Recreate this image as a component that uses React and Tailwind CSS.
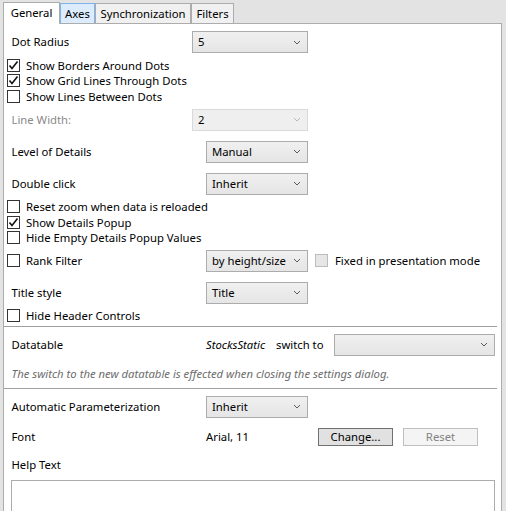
import { useState } from 'react';

const font = { fontFamily: '"Noto Sans", "Open Sans", sans-serif' };

function Chevron({ disabled }) {
  return (
    <svg width="8" height="5" viewBox="0 0 8 5" className="shrink-0">
      <path d="M1 1 L4 4 L7 1" fill="none" stroke={disabled ? '#b8b8b8' : '#5a5a5a'} strokeWidth="1" />
    </svg>
  );
}

function Select({ value, width = 'w-[102px]', disabled }) {
  return (
    <div
      className={`${width} h-[22px] flex items-center justify-between pl-[5px] pr-[6px] border ${
        disabled
          ? 'border-[#d9d9d9] bg-[#efefef] text-black'
          : 'border-[#acacac] bg-gradient-to-b from-[#f0f0f0] to-[#e5e5e5] text-black'
      }`}
    >
      <span>{value}</span>
      <Chevron disabled={disabled} />
    </div>
  );
}

function Check({ checked, disabled }) {
  return (
    <div
      className={`w-[13px] h-[13px] border flex items-center justify-center shrink-0 ${
        disabled ? 'border-[#bcbcbc] bg-[#e6e6e6]' : 'border-[#333333] bg-white'
      }`}
    >
      {checked && (
        <svg width="11" height="11" viewBox="0 0 11 11">
          <path d="M1.5 5.5 L4 8.5 L9.5 1.5" fill="none" stroke="#111" strokeWidth="1.6" />
        </svg>
      )}
    </div>
  );
}

function CheckRow({ label, checked }) {
  return (
    <div className="h-[15.5px] flex items-center gap-[6px]">
      <Check checked={checked} />
      <span>{label}</span>
    </div>
  );
}

function Row({ label, children, className = 'mt-[10px]', labelClass = 'text-black', labelWidth = 'w-[199px]' }) {
  return (
    <div className={`flex items-center ${className}`}>
      <div className={`${labelWidth} pl-[4.5px] ${labelClass}`}>{label}</div>
      {children}
    </div>
  );
}

function Tab({ label, active, hover, width }) {
  if (active) {
    return (
      <div className={`${width} h-[22px] -mb-px pt-[4px] flex justify-center bg-white border border-b-0 border-[#acacac] relative z-10`}>
        {label}
      </div>
    );
  }
  return (
    <div
      className={`${width} h-[20px] flex items-center justify-center border border-b-0 ${
        hover ? 'bg-[#dcecfc] border-[#7eb4ea]' : 'bg-[#f0f0f0] border-[#acacac]'
      }`}
    >
      {label}
    </div>
  );
}

export default function App() {
  const [tab] = useState('General');
  return (
    <div className="w-[506px] h-[511px] bg-[#e3e3e3] overflow-hidden text-[11.3px] leading-none pl-[3px] pr-[4px] pt-[1px]" style={font}>
      <div className="flex items-end h-[22px]">
        <Tab label="General" width="w-[57px]" active={tab === 'General'} />
        <Tab label="Axes" width="w-[35px]" hover />
        <Tab label="Synchronization" width="w-[96px]" />
        <Tab label="Filters" width="w-[43px]" />
      </div>
      <div className="bg-white border border-[#acacac] h-[600px] px-[3px] pt-[7px]">
        <Row label="Dot Radius" className="" labelWidth="w-[185px]">
          <Select value="5" width="w-[116px]" />
        </Row>
        <div className="mt-[4.5px]">
          <CheckRow label="Show Borders Around Dots" checked />
          <CheckRow label="Show Grid Lines Through Dots" checked />
          <CheckRow label="Show Lines Between Dots" />
        </div>
        <Row label="Line Width:" className="mt-[4.5px]" labelClass="text-[#8a8a8a]" labelWidth="w-[185px]">
          <Select value="2" width="w-[116px]" disabled />
        </Row>
        <Row label="Level of Details">
          <Select value="Manual" />
        </Row>
        <Row label="Double click">
          <Select value="Inherit" />
        </Row>
        <div className="mt-[4.5px]">
          <CheckRow label="Reset zoom when data is reloaded" />
          <CheckRow label="Show Details Popup" checked />
          <CheckRow label="Hide Empty Details Popup Values" />
        </div>
        <div className="flex items-center mt-[4px]">
          <div className="w-[199px] flex items-center gap-[6px]">
            <Check />
            <span>Rank Filter</span>
          </div>
          <Select value="by height/size" />
          <div className="ml-[7px] flex items-center gap-[7px]">
            <Check disabled />
            <span>Fixed in presentation mode</span>
          </div>
        </div>
        <Row label="Title style">
          <Select value="Title" />
        </Row>
        <div className="mt-[4.5px]">
          <CheckRow label="Hide Header Controls" />
        </div>
        <div className="-mx-[3px] mr-[1px] mt-[2px] border-t border-[#a0a0a0]" />
        <div className="flex items-center mt-[7px]">
          <div className="w-[199px] pl-[4.5px]">Datatable</div>
          <span className="italic w-[70px]">StocksStatic</span>
          <span className="w-[58px]">switch to</span>
          <Select value="" width="w-[161px]" />
        </div>
        <div className="mt-[12px] pl-[4.5px] italic text-[#6d6d6d]">
          The switch to the new datatable is effected when closing the settings dialog.
        </div>
        <div className="-mx-[3px] mr-[1px] mt-[9px] border-t border-[#a0a0a0]" />
        <Row label="Automatic Parameterization" className="mt-[7px]">
          <Select value="Inherit" />
        </Row>
        <div className="flex items-center mt-[10px]">
          <div className="w-[199px] pl-[4.5px]">Font</div>
          <span className="w-[112px]">Arial, 11</span>
          <div className="w-[75px] h-[18px] flex items-center justify-center border border-[#707070] bg-[#e1e1e1]">
            Change...
          </div>
          <div className="ml-[10px] w-[75px] h-[18px] flex items-center justify-center border border-[#bfbfbf] bg-[#f4f4f4] text-[#838383]">
            Reset
          </div>
        </div>
        <div className="mt-[13px] pl-[4.5px]">Help Text</div>
        <div className="mt-[10px] ml-[4px] w-[484px] h-[80px] border border-[#acacac] bg-white" />
      </div>
    </div>
  );
}
